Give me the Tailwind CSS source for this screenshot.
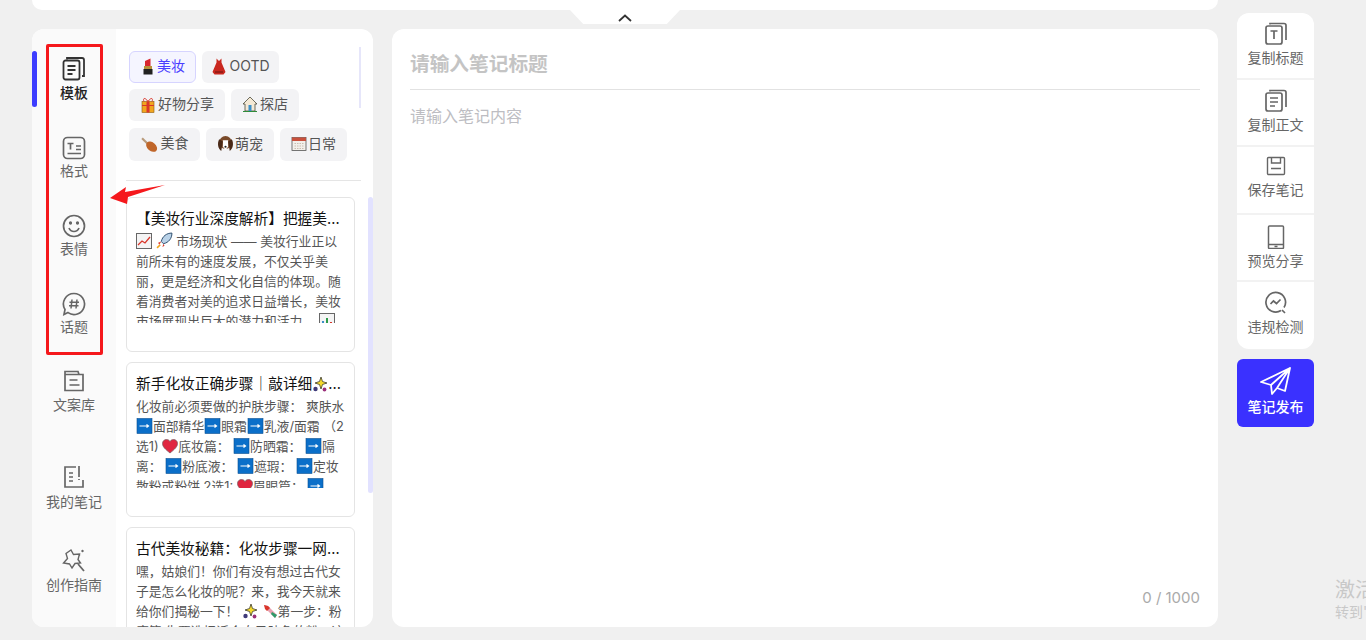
<!DOCTYPE html>
<html lang="zh-CN">
<head>
    <meta charset="UTF-8">
    <meta name="viewport" content="width=device-width, initial-scale=1.0">
    <title>笔记编辑器</title>
    <script src="https://cdn.jsdelivr.net/npm/@tailwindcss/browser@4"></script>
</head>
<body class="bg-[#f0f0f0]">
    <!-- Shared emoji drawings -->
    <svg class="hidden">
        <defs>
            <symbol id="e-arrow" viewBox="0 0 16 16"><rect x="0.500" y="0.500" width="15" height="15" fill="#0b6fc9" stroke="#0a4f8f" stroke-width=".6"/><path d="M3 8h9M10 6.500l2 1.500-2 1.500" stroke="#fff" stroke-width="1.200" fill="none"/></symbol>
            <symbol id="e-heart" viewBox="0 0 16 16"><path d="M8 15C3 11 .5 8.500.5 5.500.5 3 2.500 1.500 4.500 1.500 6 1.500 7.300 2.300 8 3.500 8.700 2.300 10 1.500 11.500 1.500 13.500 1.500 15.500 3 15.500 5.500 15.500 8.500 13 11 8 15Z" fill="#e0253f" stroke="#7d5a60" stroke-width=".8"/></symbol>
            <symbol id="e-sparkle" viewBox="0 0 16 16"><path d="M9 1l1.500 4.500L15 7l-4.500 1.500L9 13 7.500 8.500 3 7l4.500-1.500Z" fill="#f4d92c" stroke="#3f3f30" stroke-width=".8"/><circle cx="3.500" cy="13" r="2.200" fill="#3f3a7a"/><circle cx="12.500" cy="13.500" r="1.900" fill="#9a2f7a"/></symbol>
            <symbol id="e-lipstick" viewBox="0 0 16 17"><path d="M5 8V3L10.500 .5V8Z" fill="#d8262f"/><rect x="4" y="8" width="8" height="3" fill="#b8923a"/><rect x="3.500" y="11" width="9" height="5.500" fill="#222"/></symbol>
        </defs>
    </svg>

    <div class="relative h-[640px] w-[1366px] overflow-hidden bg-[#f0f0f0] font-['Inter','Noto_Sans_CJK_SC',sans-serif]">
        <div class="flex pl-[32px]">
            <!-- Main column -->
            <div class="w-[1186px]">
                <div class="h-[10px] rounded-b-xl bg-white"></div>

                <div class="mt-[19px] flex h-[598px] gap-[19px]">
                    <!-- Left panel -->
                    <div class="flex w-[341px] overflow-hidden rounded-xl bg-white">
                        <!-- Nav -->
                        <nav class="relative flex w-[84px] shrink-0 flex-col items-center bg-[#fafafa] pt-[27px] text-sm leading-5 text-[#666]">
                            <span class="absolute left-0 top-[22px] h-[56px] w-[5px] rounded-full bg-[#3d3dff]"></span>
                            <a class="flex h-[78px] flex-col items-center font-medium text-[#222]">
                                <svg class="mt-[1px] h-[24px] w-[24px]" viewBox="0 0 24 24" fill="none" stroke="#333" stroke-width="1.800"><rect x="1.500" y="3.500" width="16" height="19" rx="2"/><path d="M5 2.500V1h15a2 2 0 0 1 2 2v16h-2M5.500 9h8M5.500 13h8M5.500 17h5"/></svg>
                                <span class="mt-[2px]">模板</span>
                            </a>
                            <a class="flex h-[78px] flex-col items-center">
                                <svg class="mt-[2px] h-[24px] w-[24px]" viewBox="0 0 24 24" fill="none" stroke="#666" stroke-width="1.700"><rect x="1.500" y="1.500" width="21" height="21" rx="4"/><path d="M5.500 7.500h6M8.500 7.500v6M14 10h5M14 13.500h5M5.500 17.500h13.500"/></svg>
                                <span class="mt-[1px]">格式</span>
                            </a>
                            <a class="flex h-[78px] flex-col items-center">
                                <svg class="mt-[2px] h-[24px] w-[24px]" viewBox="0 0 24 24" fill="none" stroke="#666" stroke-width="1.700"><circle cx="12" cy="12" r="10.500"/><path d="M7 14c1 2.500 3 3.500 5 3.500s4-1 5-3.500"/><circle cx="8.500" cy="9" r=".8" fill="#666"/><circle cx="15.500" cy="9" r=".8" fill="#666"/></svg>
                                <span class="mt-[1px]">表情</span>
                            </a>
                            <a class="flex h-[78px] flex-col items-center">
                                <svg class="mt-[2px] h-[24px] w-[24px]" viewBox="0 0 24 24" fill="none" stroke="#666" stroke-width="1.700"><path d="M12 1.500a10.500 10.500 0 1 1-6 19.100L2 22.500l1-5A10.500 10.500 0 0 1 12 1.500Z"/><path d="M10 7.500l-1 9M15 7.500l-1 9M7.500 10.200h9.500M7 13.800h9.500" stroke-width="1.500"/></svg>
                                <span class="mt-[1px]">话题</span>
                            </a>
                            <a class="flex h-[96px] flex-col items-center">
                                <svg class="mt-[1px] h-[24px] w-[24px]" viewBox="0 0 24 24" fill="none" stroke="#666" stroke-width="1.700"><path d="M3 21.500V2.500h13l1 3h4v16ZM3 5.500h14M7.500 11h8M7.500 16h10"/></svg>
                                <span class="mt-[2px]">文案库</span>
                            </a>
                            <a class="flex h-[83px] flex-col items-center">
                                <svg class="mt-[1px] h-[24px] w-[24px]" viewBox="0 0 24 24" fill="none" stroke="#666" stroke-width="1.700"><path d="M14 2H3v20h18v-7M7 8h4M7 12h4M7 16h4M17 1v11M17 14v1"/></svg>
                                <span class="mt-[3px]">我的笔记</span>
                            </a>
                            <a class="flex flex-col items-center">
                                <svg class="mt-[1px] h-[26px] w-[26px]" viewBox="0 0 26 26" fill="none" stroke="#666" stroke-width="1.400"><path d="M10 2l2.500 4.500 6-.5-1.500 5.500L19.500 15l-5.500.5-3 4.500-2.500-4-6-1 4-4.500L5 5.500Z"/><path d="M17 16l6 7" stroke-width="1.800"/><circle cx="21.500" cy="3" r="1.200" fill="#666" stroke="none"/><circle cx="18.500" cy="7" r=".8" fill="#666" stroke="none"/></svg>
                                <span class="mt-[1px]">创作指南</span>
                            </a>
                        </nav>

                        <!-- Templates -->
                        <div class="relative min-w-0 flex-1 pl-[10px] text-sm">
                            <div class="relative h-[152px] w-[235px] border-b border-[#e5e5e5] pl-[3px] pt-[22px]">
                                <span class="absolute right-0 top-[18px] h-[61px] w-[2px] bg-[#e6e6fa]"></span>
                                <div class="flex h-[32px] gap-[6px]">
                                    <span class="flex w-[67px] items-center justify-center gap-[1px] rounded-md border border-[#d6d4ff] bg-[#f5f5ff] pb-[2px] text-[#4a3dff]"><svg class="h-[17px] w-[16px]" viewBox="0 0 16 17"><use href="#e-lipstick"/></svg>美妆</span>
                                    <span class="flex w-[77px] items-center justify-center gap-[2px] rounded-md bg-[#f3f3f5] pb-[2px] text-[#555]"><svg class="h-[17px] w-[16px]" viewBox="0 0 16 17"><path d="M5.500 .5v4L1.500 14l2 2.500h9l2-2.500-4-9.500v-4L8 3Z" fill="#c9281f"/><path d="M4 14h8" stroke="#6d1510"/></svg>OOTD</span>
                                </div>
                                <div class="mt-[6px] flex h-[32px] gap-[6px]">
                                    <span class="flex w-[96px] items-center justify-center gap-[2px] rounded-md bg-[#f3f3f5] pb-[2px] text-[#555]"><svg class="h-[17px] w-[16px]" viewBox="0 0 16 17"><rect x="2" y="5.500" width="12" height="11" fill="#f2a51e" stroke="#8a5a10" stroke-width=".6"/><path d="M6.500 5.500h3v11h-3zM2 9h12v1H2z" fill="#d9362b"/><path d="M8 5.500C5 1 2.500 2 4 5.500M8 5.500c3-4.500 5.500-3.500 4 0" fill="none" stroke="#d9362b"/></svg>好物分享</span>
                                    <span class="flex w-[68px] items-center justify-center gap-[2px] rounded-md bg-[#f3f3f5] pb-[2px] text-[#555]"><svg class="h-[16px] w-[16px]" viewBox="0 0 16 16"><path d="M8 1L1 8h2v7h10V8h2Z" fill="#f5e9d5" stroke="#4a4a3a" stroke-width=".8"/><rect x="6.500" y="9" width="3" height="6" fill="#3b8fc9"/><path d="M1 15.500h14" stroke="#2e8b3a"/></svg>探店</span>
                                </div>
                                <div class="mt-[7px] flex h-[33px] gap-[6px]">
                                    <span class="flex w-[71px] items-center justify-center gap-[3px] rounded-md bg-[#f3f3f5] pb-[3px] text-[#555]"><svg class="h-[17px] w-[17px]" viewBox="0 0 16 16"><path d="M1 3l5 5" stroke="#b89a7a" stroke-width="2"/><ellipse cx="10" cy="11" rx="5.800" ry="4" transform="rotate(40 10 11)" fill="#c0662a"/></svg>美食</span>
                                    <span class="flex w-[68px] items-center justify-center gap-[1px] rounded-md bg-[#f3f3f5] pb-[2px] text-[#555]"><svg class="h-[17px] w-[17px]" viewBox="0 0 16 16"><circle cx="8" cy="7" r="6" fill="#7a4a2a"/><path d="M5.500 5h5v6l-2.500 3-2.500-3Z" fill="#fff"/><path d="M2 4c-2 4-1 9 2 11l1.500-9ZM14 4c2 4 1 9-2 11l-1.500-9Z" fill="#4a2a18"/><circle cx="8" cy="11" r="1" fill="#222"/></svg>萌宠</span>
                                    <span class="flex w-[67px] items-center justify-center gap-[1px] rounded-md bg-[#f3f3f5] pb-[2px] text-[#555]"><svg class="h-[16px] w-[16px]" viewBox="0 0 16 16"><rect x="1" y="1.500" width="14" height="13" fill="#f2efea" stroke="#555" stroke-width=".8"/><rect x="1" y="1.500" width="14" height="3.500" fill="#c8503c"/><path d="M3.500 7.500h9M3.500 10h9M3.500 12.500h9" stroke="#c9bdb0" stroke-dasharray="1.500 1"/></svg>日常</span>
                                </div>
                            </div>

                            <span class="absolute right-0 top-[168px] h-[296px] w-[5px] rounded-full bg-[#e2e2ff]"></span>

                            <!-- Cards -->
                            <div class="mt-[16px] flex w-[229px] flex-col gap-[10px]">
                                <article class="h-[155px] shrink-0 rounded-md border border-[#e4e4e4] bg-white px-[9px] pt-[11px]">
                                    <h3 class="truncate text-[14.7px] leading-5 text-[#111]">【美妆行业深度解析】把握美妆行业发展</h3>
                                    <div class="mt-[3px] h-[91px] overflow-hidden text-[12.8px] leading-5 text-[#555]">
                                        <svg class="inline-block h-[16px] w-[16px] align-[-3px]" viewBox="0 0 16 16"><rect x=".5" y=".5" width="15" height="15" fill="#f4f4f4" stroke="#666"/><path d="M2 12l4-4 3 2 5-6" stroke="#d9362b" fill="none" stroke-width="1.300"/></svg>
                                        <svg class="inline-block h-[17px] w-[17px] align-[-3px]" viewBox="0 0 16 16"><path d="M15 1c-5 0-9 3-10 8l2 2c5-1 8-5 8-10Z" fill="#b9d2e8" stroke="#2a4a6a" stroke-width=".9"/><path d="M5 9l-3 1 1 2ZM7 11l-1 3 2-1Z" fill="#d9362b"/><path d="M4 12l-3 3" stroke="#f2a51e" stroke-width="1.500"/></svg>
                                        市场现状 —— 美妆行业正以前所未有的速度发展，不仅关乎美丽，更是经济和文化自信的体现。随着消费者对美的追求日益增长，美妆市场展现出巨大的潜力和活力。
                                        <svg class="inline-block h-[16px] w-[16px] align-[-3px]" viewBox="0 0 16 16"><rect x=".5" y=".5" width="15" height="15" fill="#f4f4f4" stroke="#666"/><path d="M4 13V8" stroke="#3b8fc9" stroke-width="2"/><path d="M8 13V5" stroke="#2e9b4a" stroke-width="2"/><path d="M12 13V9" stroke="#d9362b" stroke-width="2"/></svg>
                                    </div>
                                </article>

                                <article class="h-[155px] shrink-0 rounded-md border border-[#e4e4e4] bg-white px-[9px] pt-[11px]">
                                    <h3 class="flex text-[14.7px] leading-5 text-[#111]"><span class="whitespace-nowrap">新手化妆正确步骤｜敲详细</span><svg class="h-[16px] w-[16px] shrink-0 self-center"><use href="#e-sparkle"/></svg><span>...</span></h3>
                                    <div class="mt-[3px] h-[91px] overflow-hidden text-[12.8px] leading-5 text-[#555]">
                                        化妆前必须要做的护肤步骤： 爽肤水<svg class="inline-block h-[16px] w-[17px] align-[-3px]"><use href="#e-arrow"/></svg>面部精华<svg class="inline-block h-[16px] w-[17px] align-[-3px]"><use href="#e-arrow"/></svg>眼霜<svg class="inline-block h-[16px] w-[17px] align-[-3px]"><use href="#e-arrow"/></svg>乳液/面霜 （2选1) <svg class="inline-block h-[16px] w-[16px] align-[-3px]"><use href="#e-heart"/></svg>底妆篇： <svg class="inline-block h-[16px] w-[17px] align-[-3px]"><use href="#e-arrow"/></svg>防晒霜： <svg class="inline-block h-[16px] w-[17px] align-[-3px]"><use href="#e-arrow"/></svg>隔离： <svg class="inline-block h-[16px] w-[17px] align-[-3px]"><use href="#e-arrow"/></svg>粉底液： <svg class="inline-block h-[16px] w-[17px] align-[-3px]"><use href="#e-arrow"/></svg>遮瑕： <svg class="inline-block h-[16px] w-[17px] align-[-3px]"><use href="#e-arrow"/></svg>定妆散粉或粉饼 2选1: <svg class="inline-block h-[16px] w-[16px] align-[-3px]"><use href="#e-heart"/></svg>眉眼篇： <svg class="inline-block h-[16px] w-[17px] align-[-3px]"><use href="#e-arrow"/></svg>
                                    </div>
                                </article>

                                <article class="h-[155px] shrink-0 rounded-md border border-[#e4e4e4] bg-white px-[9px] pt-[11px]">
                                    <h3 class="truncate text-[14.7px] leading-5 text-[#111]">古代美妆秘籍：化妆步骤一网打尽，让你</h3>
                                    <div class="mt-[3px] h-[91px] overflow-hidden text-[12.8px] leading-5 text-[#555]">
                                        嘿，姑娘们！你们有没有想过古代女子是怎么化妆的呢？来，我今天就来给你们揭秘一下！ <svg class="inline-block h-[16px] w-[16px] align-[-3px]"><use href="#e-sparkle"/></svg> <svg class="inline-block h-[16px] w-[16px] align-[-3px]" viewBox="0 0 16 16"><path d="M2 2l4 1 9 9-2 3-9-9Z" fill="#e8a0b0"/><path d="M2 2l4 1 2 2-3 3-2-2Z" fill="#d9362b"/><path d="M10 9l5 3-2 3-4-4Z" fill="#2e9b6a"/></svg>第一步：粉底篇 先要选择适合自己肤色的粉，这样才能
                                    </div>
                                </article>
                            </div>
                        </div>
                    </div>

                    <!-- Editor -->
                    <div class="flex min-w-0 flex-1 flex-col rounded-xl bg-white px-[18px]">
                        <input class="mt-[21px] h-[40px] w-full border-b border-[#e2e2e2] pb-[12px] text-[19.7px] font-semibold leading-7 outline-none placeholder:text-[#c4c4c4]" placeholder="请输入笔记标题">
                        <textarea class="mt-[14px] w-full flex-1 resize-none text-base leading-6 outline-none placeholder:text-[#bdbdc2]" placeholder="请输入笔记内容"></textarea>
                        <div class="mb-[19px] text-right text-[15px] leading-5 text-[#aaa]">0 / 1000</div>
                    </div>
                </div>
            </div>

            <!-- Right tools -->
            <div class="ml-[19px] w-[77px] pt-[13px] text-sm leading-5">
                <div class="overflow-hidden rounded-xl bg-white text-[#666]">
                    <a class="flex h-[67px] flex-col items-center border-b-2 border-[#f2f2f2] pt-[9px]">
                        <svg class="h-[24px] w-[24px]" viewBox="0 0 24 24" fill="none" stroke="#666" stroke-width="1.700"><rect x="2" y="4" width="16" height="18" rx="2"/><path d="M6 2.500V1.500h14a2 2 0 0 1 2 2V18M6.500 9h7M10 9v8"/></svg>
                        <span class="mt-[2px]">复制标题</span>
                    </a>
                    <a class="flex h-[67px] flex-col items-center border-b-2 border-[#f2f2f2] pt-[9px]">
                        <svg class="h-[24px] w-[24px]" viewBox="0 0 24 24" fill="none" stroke="#666" stroke-width="1.700"><rect x="2" y="4" width="16" height="18" rx="2"/><path d="M6 2.500V1.500h14a2 2 0 0 1 2 2V18M6 9h8M6 13h8M6 17h5"/></svg>
                        <span class="mt-[2px]">复制正文</span>
                    </a>
                    <a class="flex h-[68px] flex-col items-center border-b-2 border-[#f2f2f2] pt-[9px]">
                        <svg class="h-[20px] w-[20px]" viewBox="0 0 20 20" fill="none" stroke="#666" stroke-width="1.400"><rect x="1.500" y="1.500" width="17" height="17" rx="1"/><path d="M5.500 1.500v5.500h9V1.500M5 12.500h10"/></svg>
                        <span class="mt-[4px]">保存笔记</span>
                    </a>
                    <a class="flex h-[67px] flex-col items-center border-b-2 border-[#f2f2f2] pt-[10px]">
                        <svg class="h-[24px] w-[24px]" viewBox="0 0 24 24" fill="none" stroke="#666" stroke-width="1.500"><rect x="4.500" y="1" width="15" height="22.500" rx="1"/><path d="M4.500 19.500h15M10.500 21.500h3"/></svg>
                        <span class="mt-[2px]">预览分享</span>
                    </a>
                    <a class="flex h-[67px] flex-col items-center pt-[9px]">
                        <svg class="h-[24px] w-[24px]" viewBox="0 0 24 24" fill="none" stroke="#666" stroke-width="1.700"><path d="M17 19.500a9.800 9.800 0 1 1 3-3"/><path d="M6.500 13l3-3 3 2.500 4-4M18 19l3 3" /></svg>
                        <span class="mt-[2px]">违规检测</span>
                    </a>
                </div>
                <a class="mt-[10px] flex h-[68px] flex-col items-center rounded-md bg-[#3a31ff] pt-[7px] font-medium text-white">
                    <svg class="h-[32px] w-[32px]" viewBox="0 0 32 32" fill="none" stroke="#fff" stroke-width="1.800" stroke-linejoin="round"><path d="M30 2L1 16l10 3 1 9 5-6 8 3ZM30 2L11 19M30 2L17 22"/></svg>
                    <span class="mt-[-1px]">笔记发布</span>
                </a>
            </div>
        </div>

        <!-- Collapse tab over the top bar -->
        <button class="absolute left-[570px] top-[10px] flex h-[14px] w-[110px] items-start justify-center bg-white [clip-path:polygon(0_0,100%_0,88%_100%,12%_100%)]">
            <svg class="mt-[4px] h-[8px] w-[14px]" viewBox="0 0 14 8" fill="none" stroke="#333" stroke-width="1.800"><path d="M1 7l6-5.500L13 7"/></svg>
        </button>

        <!-- Annotation drawn over the screenshot -->
        <div class="absolute left-[46px] top-[44px] h-[311px] w-[57px] rounded-[2px] border-[3px] border-[#f5181c]"></div>
        <svg class="absolute left-[108px] top-[183px] h-[24px] w-[60px]" viewBox="108 183 60 24"><polygon points="110,198 126,187 125,192 165,185 128,197 127,204" fill="#f5181c"/></svg>

        <!-- Windows activation watermark -->
        <div class="absolute left-[1335px] top-[578px] whitespace-nowrap text-[#c8c8c8]">
            <p class="text-[20px] leading-[24px]">激活 Windows</p>
            <p class="text-sm leading-5">转到"设置"以激活 Windows。</p>
        </div>
    </div>
</body>
</html>
